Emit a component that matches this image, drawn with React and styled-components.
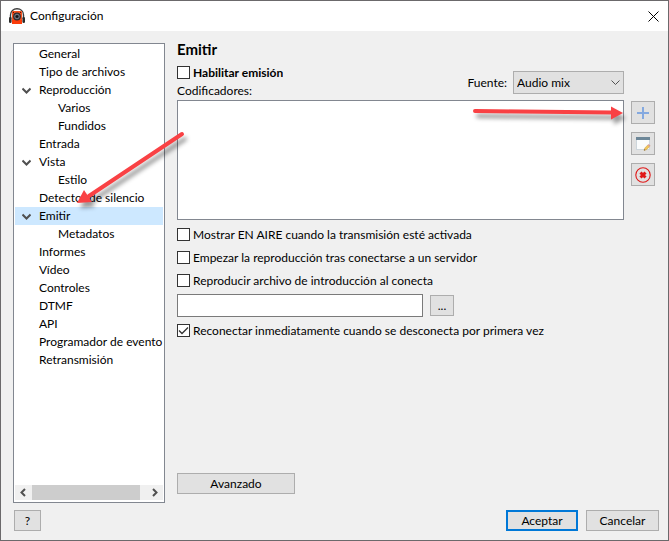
import React, { useState } from 'react';
import styled, { createGlobalStyle } from 'styled-components';

const GlobalStyle = createGlobalStyle`
*{
box-sizing:border-box;
}
body{
margin:0;
background-color:#f0f0f0;
}
body, button, input, select{
font-family:Lato, "Open Sans", sans-serif;
font-size:12px;
line-height:18px;
color:#000;
}
`;

const Window = styled.div`
position:relative;
min-height:100vh;
display:flex;
flex-direction:column;
border:1px solid #6b696b;
background-color:#f0f0f0;
`;

const TitleBar = styled.header`
display:flex;
align-items:center;
gap:5px;
height:30px;
padding:0 9px 0 8px;
background-color:#fff;
`;

const WindowTitle = styled.span`
flex:1;
`;

const Close = styled.button`
display:grid;
place-items:center;
padding:0;
border:none;
background-color:transparent;
`;

const Body = styled.main`
flex:1;
display:flex;
gap:12px;
padding:8px 13px 0 12px;
`;

const Sidebar = styled.nav`
display:flex;
flex-direction:column;
flex-shrink:0;
width:152px;
margin-top:4px;
padding:1px;
border:1px solid #828790;
background-color:#fff;
`;

const Tree = styled.ul`
flex:1;
margin:0;
padding:0;
list-style:none;
`;

const TreeItem = styled.button`
display:flex;
align-items:center;
width:100%;
height:18px;
padding:0 0 0 ${({ $level }) => $level * 19 + 5}px;
border:none;
white-space:nowrap;
text-align:left;
background-color:${({ $active }) => $active ? '#cde8ff' : 'transparent'};
`;

const Toggle = styled.span`
display:grid;
place-items:center;
flex-shrink:0;
width:13px;
margin-right:6px;
`;

const ScrollBar = styled.div`
display:flex;
height:15px;
margin-bottom:1px;
background-color:#f0f0f0;
`;

const ScrollArrow = styled.button`
display:grid;
place-items:center;
width:17px;
padding:0;
border:none;
background-color:transparent;
`;

const Track = styled.div`
flex:1;
`;

const Thumb = styled.div`
width:95%;
height:100%;
background-color:#cdcdcd;
`;

const Panel = styled.section`
flex:1;
display:flex;
flex-direction:column;
min-width:0;
padding-bottom:9px;
`;

const Encoders = styled.div`
display:grid;
grid-template-columns:1fr 24px;
column-gap:7px;
`;

const PanelTop = styled.div`
display:flex;
justify-content:space-between;
align-items:flex-end;
grid-column:1;
`;

const Heading = styled.h1`
margin:0 0 4px;
font-size:15px;
line-height:20px;
`;

const Label = styled.label`
display:block;
`;

const Source = styled.div`
display:flex;
align-items:center;
gap:6px;
margin-bottom:6px;
`;

const SelectBox = styled.div`
display:grid;
align-items:center;
width:111px;
& > *{
grid-area:1 / 1;
}
& > svg{
justify-self:end;
margin-right:4px;
pointer-events:none;
}
`;

const Select = styled.select`
appearance:none;
width:100%;
height:23px;
padding:0 20px 0 3px;
border:1px solid #adadad;
border-radius:0;
background-color:#e1e1e1;
`;

const List = styled.select`
grid-column:1;
height:120px;
padding:0;
border:1px solid #828790;
border-radius:0;
background-color:#fff;
`;

const Tools = styled.div`
display:flex;
flex-direction:column;
gap:8px;
padding-top:1px;
`;

const Button = styled.button`
display:grid;
place-items:center;
width:${({ $width }) => $width}px;
height:${({ $tall }) => $tall ? 23 : 21}px;
padding:0;
line-height:16px;
border:${({ $primary }) => $primary ? '2px solid #0078d7' : '1px solid #adadad'};
background-color:#e1e1e1;
`;

const Options = styled.div`
display:flex;
flex-direction:column;
gap:4px;
margin-top:5px;
`;

const CheckRow = styled.label`
display:flex;
align-items:center;
gap:3px;
height:19px;
max-width:${({ $clip }) => $clip ? '257px' : 'none'};
overflow:hidden;
white-space:nowrap;
font-weight:${({ $bold }) => $bold ? 700 : 400};
`;

const Box = styled.span`
display:grid;
flex-shrink:0;
width:13px;
height:13px;
& > *{
grid-area:1 / 1;
}
& > svg{
pointer-events:none;
visibility:hidden;
}
& > input:checked + svg{
visibility:visible;
}
`;

const CheckInput = styled.input`
appearance:none;
width:13px;
height:13px;
margin:0;
border:1px solid #333;
background-color:#fff;
`;

const FileRow = styled.div`
display:flex;
align-items:center;
gap:7px;
`;

const TextInput = styled.input`
width:246px;
height:23px;
padding:0 3px;
border:1px solid #7a7a7a;
background-color:#fff;
`;

const Advanced = styled.div`
margin-top:auto;
`;

const Footer = styled.footer`
display:flex;
gap:8px;
padding:7px 9px 9px 13px;
& > :first-child{
margin-right:auto;
}
`;

// Callouts drawn over the dialog
const Arrows = styled.svg`
position:absolute;
top:-1px;
left:-1px;
pointer-events:none;
filter:drop-shadow(3px 5px 2px rgba(0, 0, 0, 0.4));
`;

const sections = [
    { name: 'General', level: 0 },
    { name: 'Tipo de archivos', level: 0 },
    { name: 'Reproducción', level: 0, open: true },
    { name: 'Varios', level: 1 },
    { name: 'Fundidos', level: 1 },
    { name: 'Entrada', level: 0 },
    { name: 'Vista', level: 0, open: true },
    { name: 'Estilo', level: 1 },
    { name: 'Detector de silencio', level: 0 },
    { name: 'Emitir', level: 0, open: true },
    { name: 'Metadatos', level: 1 },
    { name: 'Informes', level: 0 },
    { name: 'Vídeo', level: 0 },
    { name: 'Controles', level: 0 },
    { name: 'DTMF', level: 0 },
    { name: 'API', level: 0 },
    { name: 'Programador de evento', level: 0 },
    { name: 'Retransmisión', level: 0 },
];

const Chevron = ({ d, width = 9, height = 9, stroke = '#505050', weight = 2 }) => (
    <svg width={width} height={height} viewBox={`0 0 ${width} ${height}`} fill="none" stroke={stroke} strokeWidth={weight}>
        <path d={d} />
    </svg>
)

const AppIcon = () => (
    <svg width="16" height="16" viewBox="0 0 16 16">
        <path d="M1.500 10V7C1.500 3 4.500 .8 8 .8S14.500 3 14.500 7v3" fill="none" stroke="#3c3c3c" strokeWidth="1.400" />
        <rect x="3" y="3" width="10" height="13" rx="1" fill="#f4511e" />
        <path d="M3 12h10v4H3z" fill="#fa3c0a" />
        <rect x="0" y="9" width="2.600" height="6" rx="1.200" fill="#2a2a2a" />
        <rect x="13.400" y="9" width="2.600" height="6" rx="1.200" fill="#2a2a2a" />
        <circle cx="8" cy="8.500" r="3.900" fill="#2b2b30" />
        <circle cx="8" cy="8.500" r="2.300" fill="none" stroke="#858b96" strokeWidth=".9" />
        <circle cx="8" cy="8.500" r=".9" fill="#111" />
        <path d="M4 4h1v1H4zM11 4h1v1h-1z" fill="#5a1505" />
    </svg>
)

const Plus = () => (
    <svg width="14" height="14" viewBox="0 0 14 14">
        <path d="M6 1h2v5h5v2H8v5H6V8H1V6h5z" fill="#84a9e0" />
    </svg>
)

const Edit = () => (
    <svg width="16" height="16" viewBox="0 0 16 16">
        <rect x="1.500" y="2.500" width="13" height="11" fill="#fafcfd" stroke="#cdd6dc" />
        <rect x="1" y="1" width="14" height="3" fill="#6d8798" />
        <path d="M9 14.500l.8-2.500 3-3 1.700 1.700-3 3z" fill="#f1c65b" stroke="#c79a45" strokeWidth=".5" />
        <path d="M12.800 9l1-1 1.700 1.700-1 1z" fill="#d99a92" />
        <path d="M9 14.500l.4-1.300.9.9z" fill="#444" />
    </svg>
)

const Remove = () => (
    <svg width="16" height="16" viewBox="0 0 16 16" fill="none" stroke="#e01818">
        <circle cx="8" cy="8" r="7.200" strokeWidth="1.100" />
        <path d="M5.500 5.500l5 5M10.500 5.500l-5 5" strokeWidth="3" />
    </svg>
)

const Check = ({ text, bold, clip, checked }) => (
    <CheckRow $bold={bold} $clip={clip}>
        <Box>
            <CheckInput type="checkbox" defaultChecked={checked} />
            <Chevron d="M2 6.500l3 3 6-6" width={13} height={13} stroke="#333" weight={1.3} />
        </Box>
        {text}
    </CheckRow>
)

const App = () => {
    const [active, setActive] = useState('Emitir');
    const [intro, setIntro] = useState('');

    return (
        <Window>
            <GlobalStyle />
            <TitleBar>
                <AppIcon />
                <WindowTitle>Configuración</WindowTitle>
                <Close aria-label="Cerrar">
                    <Chevron d="M.5 .5l10 10M10.500 .5l-10 10" width={11} height={11} stroke="#000" weight={1} />
                </Close>
            </TitleBar>
            <Body>
                <Sidebar>
                    <Tree>
                        {sections.map(({ name, level, open }) => (
                            <li key={name}>
                                <TreeItem $level={level} $active={name === active} onClick={() => setActive(name)}>
                                    <Toggle>{open && <Chevron d="M.5 2.500l4 4 4-4" />}</Toggle>
                                    {name}
                                </TreeItem>
                            </li>
                        ))}
                    </Tree>
                    <ScrollBar>
                        <ScrollArrow aria-label="Izquierda"><Chevron d="M6 1L2.500 4.500 6 8" /></ScrollArrow>
                        <Track><Thumb /></Track>
                        <ScrollArrow aria-label="Derecha"><Chevron d="M3 1l3.500 3.500L3 8" /></ScrollArrow>
                    </ScrollBar>
                </Sidebar>
                <Panel>
                    <Encoders>
                        <PanelTop>
                            <div>
                                <Heading>Emitir</Heading>
                                <Check text="Habilitar emisión" bold />
                                <Label htmlFor="encoders">Codificadores:</Label>
                            </div>
                            <Source>
                                <label htmlFor="source">Fuente:</label>
                                <SelectBox>
                                    <Select id="source">
                                        <option>Audio mix</option>
                                    </Select>
                                    <Chevron d="M.5 2.500l4 4 4-4" weight={1} />
                                </SelectBox>
                            </Source>
                        </PanelTop>
                        <List id="encoders" size={6} />
                        <Tools>
                            <Button $width={24} $tall aria-label="Añadir"><Plus /></Button>
                            <Button $width={24} $tall aria-label="Editar"><Edit /></Button>
                            <Button $width={24} $tall aria-label="Eliminar"><Remove /></Button>
                        </Tools>
                    </Encoders>
                    <Options>
                        <Check text="Mostrar EN AIRE cuando la transmisión esté activada" />
                        <Check text="Empezar la reproducción tras conectarse a un servidor" />
                        <Check text="Reproducir archivo de introducción al conecta" clip />
                        <FileRow>
                            <TextInput aria-label="Archivo de introducción" value={intro} onChange={(e) => setIntro(e.target.value)} />
                            <Button $width={24}>...</Button>
                        </FileRow>
                        <Check text="Reconectar inmediatamente cuando se desconecta por primera vez" checked />
                    </Options>
                    <Advanced>
                        <Button $width={118}>Avanzado</Button>
                    </Advanced>
                </Panel>
            </Body>
            <Footer>
                <Button $width={27}>?</Button>
                <Button $width={72} $primary>Aceptar</Button>
                <Button $width={73}>Cancelar</Button>
            </Footer>
            <Arrows width="640" height="220" viewBox="0 0 640 220">
                <path d="M182 134L89 196" stroke="#f94144" strokeWidth="4" strokeLinecap="round" />
                <path d="M77 203L84 190 92 202z" fill="#f94144" />
                <path d="M475 111L612 112.500" stroke="#f94144" strokeWidth="4" strokeLinecap="round" />
                <path d="M623 113L611 106.500v13z" fill="#f94144" />
            </Arrows>
        </Window>
    )
}

export default App
